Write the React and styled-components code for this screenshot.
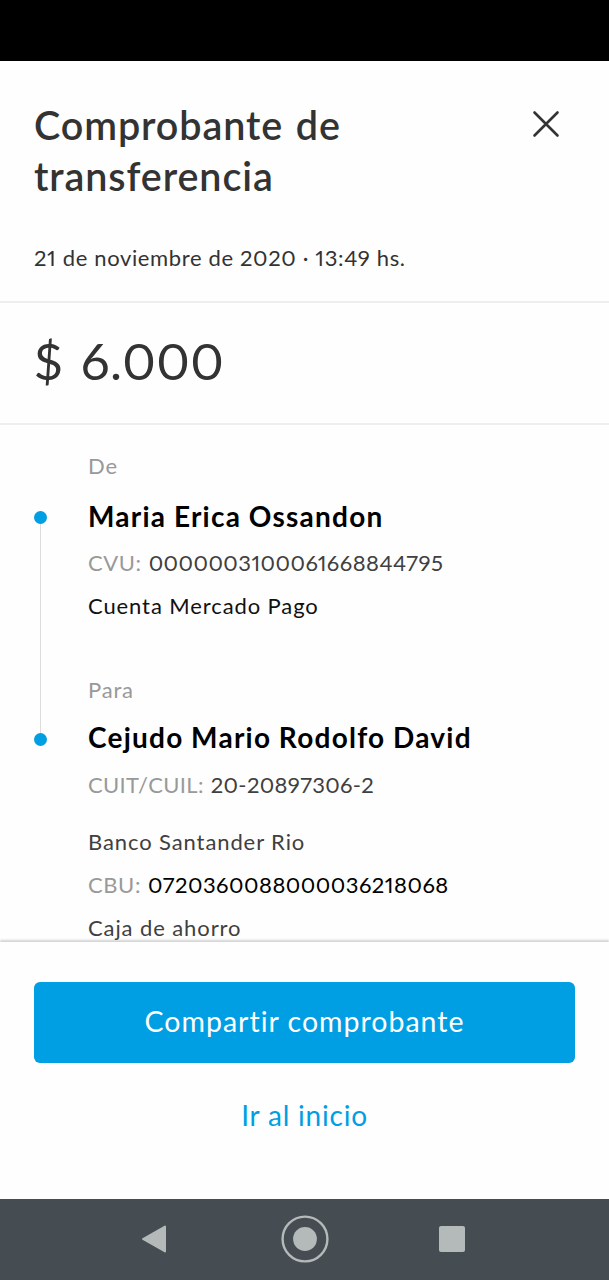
import styled, { createGlobalStyle } from "styled-components";

const App = () => {
    return (
        <>
            <GlobalStyle />
            <Pantalla>
                <BarraEstado />
                <Encabezado>
                    <Fila>
                        <Titulo>Comprobante de<br />transferencia</Titulo>
                        <Cerrar aria-label="Cerrar">
                            <svg width="28" height="28" viewBox="0 0 28 28" fill="none" stroke="#333" strokeWidth="2.6" strokeLinecap="round">
                                <path d="M2.5 2.5 L25.5 25.5 M25.5 2.5 L2.5 25.5" />
                            </svg>
                        </Cerrar>
                    </Fila>
                    <Fecha>21 de noviembre de 2020 · 13:49 hs.</Fecha>
                </Encabezado>
                <Monto>$ 6.000</Monto>
                <Detalle>
                    <Recorrido>
                        <Punto />
                        <Linea />
                        <Punto />
                    </Recorrido>
                    <Datos>
                        <Rotulo>De</Rotulo>
                        <Nombre $arriba={18}>Maria Erica Ossandon</Nombre>
                        <Dato $arriba={7}>
                            <Etiqueta>CVU:</Etiqueta>
                            <Numero $espacio={0.46}>0000003100061668844795</Numero>
                        </Dato>
                        <Dato $color="#111">Cuenta Mercado Pago</Dato>

                        <Rotulo $arriba={49}>Para</Rotulo>
                        <Nombre $arriba={15}>Cejudo Mario Rodolfo David</Nombre>
                        <Dato $arriba={8}>
                            <Etiqueta $espacio={0.35}>CUIT/CUIL:</Etiqueta>
                            <Numero $espacio={0.35}>20-20897306-2</Numero>
                        </Dato>
                        <Dato $arriba={14}>Banco Santander Rio</Dato>
                        <Dato $color="#000">
                            <Etiqueta>CBU:</Etiqueta>
                            <Numero $espacio={0.5}>0720360088000036218068</Numero>
                        </Dato>
                        <Dato>Caja de ahorro</Dato>
                    </Datos>
                </Detalle>
                <Acciones>
                    <Boton>Compartir comprobante</Boton>
                    <Enlace>Ir al inicio</Enlace>
                </Acciones>
                <Navegacion>
                    <svg width="26" height="30" viewBox="0 0 26 30" fill="#b4b9ba" stroke="#b4b9ba" strokeWidth="2" strokeLinejoin="round">
                        <path d="M2 15 L24 2.5 V27.5 Z" />
                    </svg>
                    <Inicio width="48" height="48" viewBox="0 0 48 48" fill="none">
                        <circle cx="24" cy="24" r="22.4" stroke="#b4b9ba" strokeWidth="2.4" />
                        <circle cx="24" cy="24" r="11.9" fill="#b4b9ba" />
                    </Inicio>
                    <Cuadrado />
                </Navegacion>
            </Pantalla>
        </>
    );
}

const GlobalStyle = createGlobalStyle`
    * {
        box-sizing: border-box;
    }

    body {
        margin: 0;
        background-color: #fff;
        font-family: Lato, "Liberation Sans", sans-serif;
        font-variant-numeric: proportional-nums;
    }
`

const Pantalla = styled.div`
    display: flex;
    flex-direction: column;
    width: 609px;
    height: 1280px;
    overflow: hidden;
    background-color: #fefefe;
    color: #333;
`

const BarraEstado = styled.div`
    flex: none;
    height: 61px;
    background-color: #000;
`

const Encabezado = styled.header`
    flex: none;
    height: 242px;
    padding: 38px 49px 0 34px;
    border-bottom: 2px solid #eee;
`

const Fila = styled.div`
    display: flex;
    justify-content: space-between;
    align-items: flex-start;
`

const Titulo = styled.h1`
    margin: 0;
    font-size: 39.5px;
    font-weight: 600;
    line-height: 51px;
    letter-spacing: 0.9px;
    word-spacing: 2px;
`

const Cerrar = styled.button`
    display: flex;
    margin: 11px 0 0;
    padding: 0;
    border: 0;
    background: none;
`

const Fecha = styled.p`
    margin: 43px 0 0;
    font-size: 22px;
    line-height: 28px;
    letter-spacing: 0.64px;
`

const Monto = styled.div`
    flex: none;
    height: 122px;
    padding-left: 34px;
    border-bottom: 2px solid #eee;
    font-size: 51px;
    line-height: 115px;
    letter-spacing: 0.5px;
    word-spacing: 4px;
`

const Detalle = styled.main`
    display: flex;
    flex: none;
    height: 517px;
    padding-left: 34px;
    overflow: hidden;
`

const Recorrido = styled.div`
    display: flex;
    flex-direction: column;
    align-items: center;
    width: 13px;
    height: 321px;
    padding-top: 86px;
`

const Punto = styled.span`
    flex: none;
    width: 13px;
    height: 13px;
    border-radius: 50%;
    background-color: #009ee3;
`

const Linea = styled.span`
    flex: 1;
    width: 1px;
    background-color: #ddd;
`

const Datos = styled.div`
    padding: 27px 0 0 41px;
    white-space: nowrap;
`

const Rotulo = styled.p`
    margin: ${({ $arriba = 0 }) => $arriba}px 0 0;
    color: #999;
    font-size: 22px;
    line-height: 28px;
    letter-spacing: 0.8px;
`

const Nombre = styled.h2`
    margin: ${({ $arriba }) => $arriba}px 0 0;
    color: #000;
    font-size: 28px;
    font-weight: 700;
    line-height: 36px;
    letter-spacing: 1.25px;
    word-spacing: -0.5px;
`

const Dato = styled.p`
    margin: ${({ $arriba = 0 }) => $arriba}px 0 0;
    color: ${({ $color = "#404040" }) => $color};
    font-size: 22px;
    line-height: 43px;
    letter-spacing: 0.9px;
`

const Etiqueta = styled.span`
    margin-right: 7px;
    color: #999;
    letter-spacing: ${({ $espacio = 0.6 }) => $espacio}px;
`

const Numero = styled.span`
    letter-spacing: ${({ $espacio }) => $espacio}px;
`

const Acciones = styled.footer`
    display: flex;
    flex-direction: column;
    align-items: center;
    flex: none;
    height: 257px;
    padding: 40px 34px 0;
    background-color: #fefefe;
    box-shadow: 0 -2px 2px rgba(0, 0, 0, 0.17);
`

const Boton = styled.button`
    width: 100%;
    height: 81px;
    padding: 0 0 3px;
    border: 0;
    border-radius: 6px;
    background-color: #009ee3;
    color: #fff;
    font-family: inherit;
    font-size: 28.5px;
    letter-spacing: 1px;
`

const Enlace = styled.button`
    margin-top: 33px;
    padding: 0;
    border: 0;
    background: none;
    color: #009ee3;
    font-family: inherit;
    font-size: 28px;
    line-height: 38px;
    letter-spacing: 0.8px;
`

const Navegacion = styled.nav`
    display: flex;
    flex: none;
    align-items: center;
    justify-content: space-between;
    height: 81px;
    padding: 0 144px 1px 141px;
    background-color: #464d52;
`

const Inicio = styled.svg`
    margin-left: 3px;
`

const Cuadrado = styled.span`
    width: 26px;
    height: 26px;
    border-radius: 2px;
    background-color: #b4b9ba;
`

export default App;
